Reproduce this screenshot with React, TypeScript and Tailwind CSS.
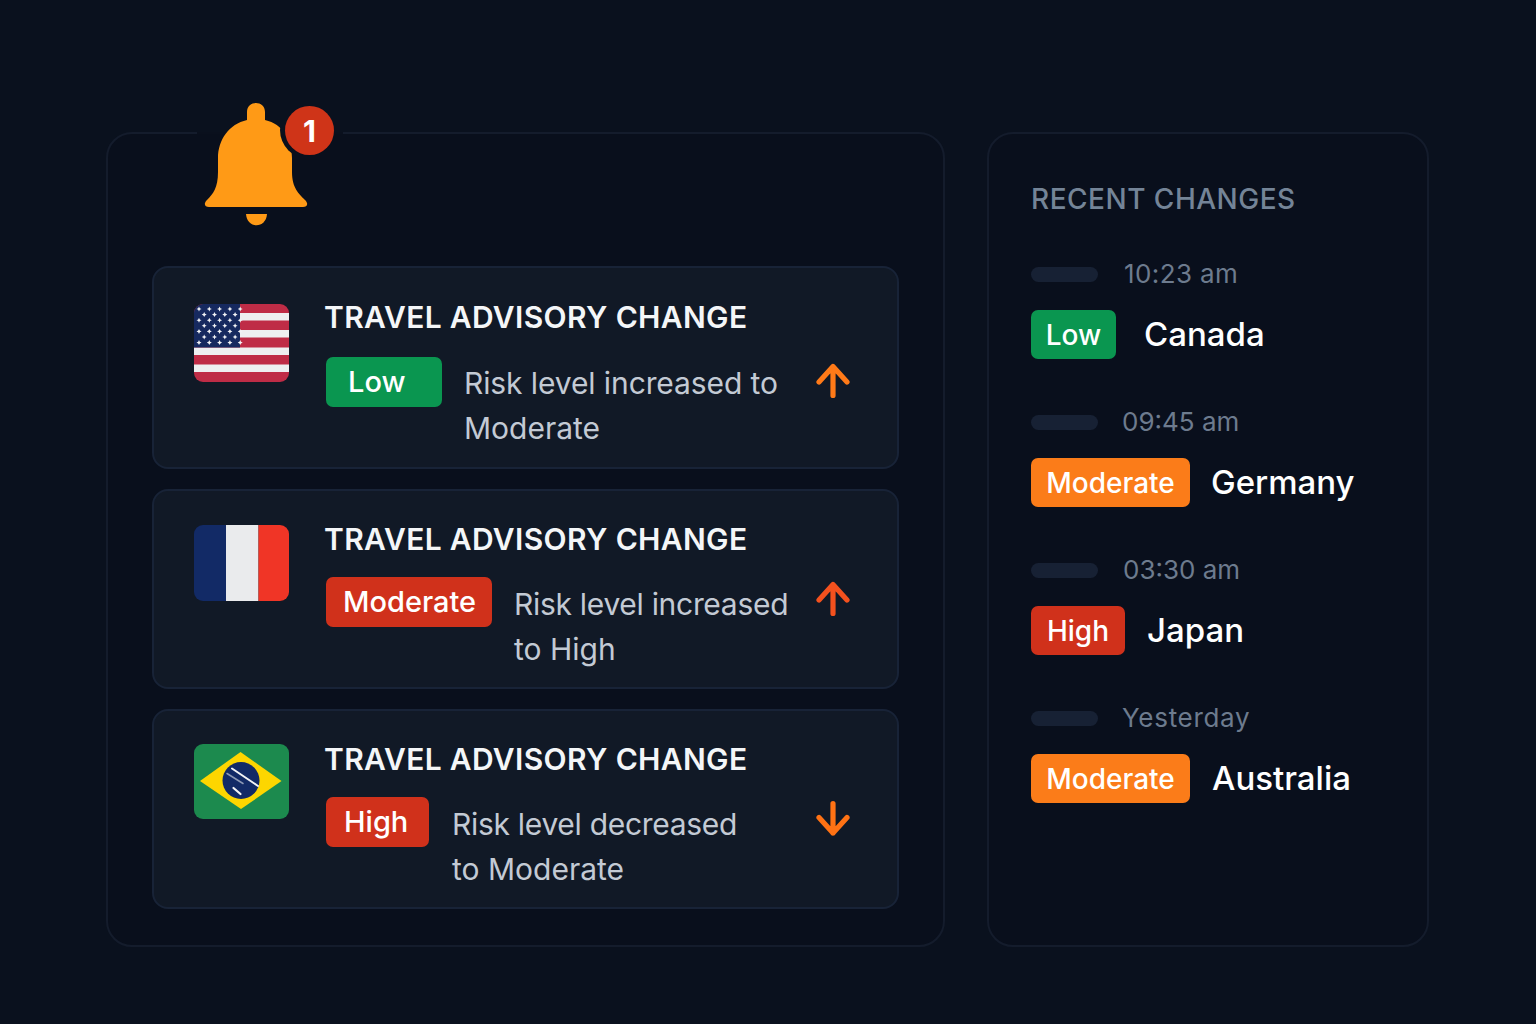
import React from "react";

const font = { fontFamily: "Inter, 'Noto Sans', sans-serif" };

function UsFlag() {
  const stars: [number, number][] = [];
  for (let r = 0; r < 7; r++) {
    const n = r % 2 === 0 ? 5 : 4;
    for (let c = 0; c < n; c++) {
      stars.push([r % 2 === 0 ? 5 + c * 10.3 : 10.2 + c * 10.3, 5 + r * 5.6]);
    }
  }
  return (
    <svg width="95" height="78" viewBox="0 0 95 78" className="shrink-0 block">
      <defs>
        <clipPath id="us"><rect width="95" height="78" rx="9" /></clipPath>
      </defs>
      <g clipPath="url(#us)">
        <rect width="95" height="78" fill="#bf2c46" />
        {[9, 26, 43.5, 60.5].map((y) => (
          <rect key={y} x="0" y={y} width="95" height="7.5" fill="#eeeff0" />
        ))}
        <rect width="46" height="43.5" fill="#16295f" />
        {stars.map(([x, y], i) => (
          <path key={i} d={`M${x} ${y - 2.5}L${x + 0.8} ${y - 0.8}L${x + 2.5} ${y}L${x + 0.8} ${y + 0.8}L${x} ${y + 2.5}L${x - 0.8} ${y + 0.8}L${x - 2.5} ${y}L${x - 0.8} ${y - 0.8}Z`} fill="#f2f3f5" />
        ))}
      </g>
    </svg>
  );
}

function FrFlag() {
  return (
    <svg width="95" height="76" viewBox="0 0 95 76" className="shrink-0 block">
      <defs>
        <clipPath id="fr"><rect width="95" height="76" rx="9" /></clipPath>
      </defs>
      <g clipPath="url(#fr)">
        <rect width="32" height="76" fill="#122a66" />
        <rect x="32" width="32.5" height="76" fill="#eaebed" />
        <rect x="64.5" width="30.5" height="76" fill="#f03526" />
      </g>
    </svg>
  );
}

function BrFlag() {
  return (
    <svg width="95" height="75" viewBox="0 0 95 75" className="shrink-0 block">
      <rect width="95" height="75" rx="9" fill="#1c8a4e" />
      <path d="M6 37L46.5 8L87.5 37L47 65Z" fill="#fdd600" />
      <circle cx="47" cy="36.5" r="18.5" fill="#122a66" />
      <path d="M38 24.5L64 42" stroke="#f2f3f5" strokeWidth="2" strokeLinecap="round" />
      <path d="M33 29.5L49 39.5" stroke="#8c98b4" strokeWidth="1.5" strokeLinecap="round" />
      <path d="M39.5 44L46.5 50" stroke="#f2f3f5" strokeWidth="2.2" strokeLinecap="round" />
    </svg>
  );
}

function Arrow({ down, color }: { down?: boolean; color: string }) {
  return (
    <svg width="36" height="38" viewBox="0 0 36 38" fill="none" className="shrink-0 block">
      <g stroke={color} strokeWidth="5.2" strokeLinecap="round" strokeLinejoin="round">
        {down ? (
          <path d="M17 3.5V33M3 17.5L17 33L31 17.5" />
        ) : (
          <path d="M17 33.5V4.5M3 20L17 4.5L31 20" />
        )}
      </g>
    </svg>
  );
}

function Bell() {
  return (
    <div className="absolute left-[89px] top-[-34px] w-[146px] h-[126px]">
      <div className="absolute left-0 right-0 top-[32px] h-[2px] bg-[#0a101d]" />
      <svg width="146" height="126" viewBox="0 0 146 126" className="absolute left-0 top-0">
        <defs>
          <mask id="notch">
            <rect width="146" height="126" fill="white" />
            <circle cx="112" cy="30" r="29" fill="black" />
          </mask>
        </defs>
        <path
          mask="url(#notch)"
          d="M50 20V12C50 0 68 0 68 12V20C86 24 95 40 95 58V72C95 88 102 94 108 100C112 104 110 107 106 107H12C8 107 6 104 10 100C16 94 21 88 21 72V58C21 40 32 24 50 20Z"
          fill="#ff9a16"
        />
        <path d="M49 114H70C69 129 50 129 49 114Z" fill="#ff9a16" />
      </svg>
      <div className="absolute left-[88px] top-[6px] w-[49px] h-[49px] rounded-full bg-[#cf3418] flex items-center justify-center text-white text-[30px] font-bold leading-none">
        1
      </div>
    </div>
  );
}

function AdvisoryCard({
  flag,
  badge,
  badgeClass,
  textClass,
  line1,
  line2,
  line1Class,
  arrow,
  arrowClass,
  rowClass,
  cardClass,
  flagClass,
}: {
  flag: React.ReactNode;
  badge: string;
  badgeClass: string;
  textClass: string;
  line1: string;
  line2: string;
  line1Class: string;
  arrow: React.ReactNode;
  arrowClass: string;
  rowClass: string;
  cardClass: string;
  flagClass: string;
}) {
  return (
    <div className={`flex rounded-[16px] border-2 border-[#182337] bg-[#111926] pl-[40px] pr-[45px] ${cardClass}`}>
      <div className={`w-[95px] shrink-0 ${flagClass}`}>{flag}</div>
      <div className="ml-[35px] flex-1">
        <div className="text-[30px] leading-[36px] font-semibold text-[#f4f6f8] tracking-[0.34px] whitespace-nowrap">
          TRAVEL ADVISORY CHANGE
        </div>
        <div className={`flex items-start relative ${rowClass}`}>
          <div className={`h-[50px] rounded-[7px] flex items-center text-white text-[29px] font-medium ml-[2px] shrink-0 ${badgeClass}`}>
            {badge}
          </div>
          <div className={`text-[30px] leading-[45px] text-[#c3cad4] whitespace-nowrap ${textClass}`}>
            <div className={line1Class}>{line1}</div>
            <div>{line2}</div>
          </div>
          <div className={`ml-auto ${arrowClass}`}>{arrow}</div>
        </div>
      </div>
    </div>
  );
}

function RecentRow({
  time,
  timeClass,
  badge,
  badgeClass,
  name,
  nameClass,
}: {
  time: string;
  timeClass: string;
  badge: string;
  badgeClass: string;
  name: string;
  nameClass: string;
}) {
  return (
    <div className="h-[148px]">
      <div className="flex items-center h-[28px]">
        <div className="w-[67px] h-[15px] rounded-full bg-[#172134]" />
        <div className={`text-[26px] leading-[28px] text-[#6d7b8e] ${timeClass}`}>{time}</div>
      </div>
      <div className="flex items-center mt-[22px]">
        <div className={`h-[49px] rounded-[7px] flex items-center justify-center text-white text-[28px] font-medium ${badgeClass}`}>
          {badge}
        </div>
        <div className={`text-[33px] leading-[49px] font-medium text-white ${nameClass}`}>{name}</div>
      </div>
    </div>
  );
}

export default function App() {
  return (
    <div className="w-full h-[1024px] bg-[#0a111e] flex items-start pl-[106px] pt-[132px] gap-[42px]" style={font}>
      <div className="relative w-[839px] h-[815px] rounded-[26px] border-2 border-[#141c2c] bg-[#090f1c] px-[44px] pt-[132px] flex flex-col gap-[20px]">
        <Bell />
        <AdvisoryCard
          flag={<UsFlag />}
          badge="Low"
          badgeClass="w-[116px] pl-[22px] bg-[#0a9650]"
          textClass="ml-[22px] mt-[4px]"
          line1="Risk level increased to"
          line1Class="tracking-[-0.1px]"
          line2="Moderate"
          arrow={<Arrow color="#ff7a18" />}
          arrowClass="mt-[5px]"
          rowClass="mt-[22px]"
          cardClass="h-[203px] pt-[31px]"
          flagClass="pt-[5px]"
        />
        <AdvisoryCard
          flag={<FrFlag />}
          badge="Moderate"
          badgeClass="w-[166px] pl-[17px] bg-[#d0311b]"
          textClass="ml-[22px] mt-[5px]"
          line1="Risk level increased"
          line1Class="tracking-[-0.3px]"
          line2="to High"
          arrow={<Arrow color="#f4511e" />}
          arrowClass="mt-[3px]"
          rowClass="mt-[20px]"
          cardClass="h-[200px] pt-[30px]"
          flagClass="pt-[4px]"
        />
        <AdvisoryCard
          flag={<BrFlag />}
          badge="High"
          badgeClass="w-[103px] pl-[18px] bg-[#d0311b]"
          textClass="ml-[23px] mt-[5px]"
          line1="Risk level decreased"
          line1Class="tracking-[-0.3px]"
          line2="to Moderate"
          arrow={<Arrow down color="#ff7214" />}
          arrowClass="mt-[3px]"
          rowClass="mt-[20px]"
          cardClass="h-[200px] pt-[30px]"
          flagClass="pt-[3px]"
        />
      </div>
      <div className="w-[442px] h-[815px] rounded-[26px] border-2 border-[#141c2c] bg-[#090f1c] pl-[42px] pt-[48px]">
        <div className="text-[28px] leading-[34px] font-medium text-[#748497] tracking-[0.5px]">RECENT CHANGES</div>
        <div className="mt-[44px]">
          <RecentRow time="10:23 am" timeClass="ml-[26px] tracking-[0.4px]" badge="Low" badgeClass="w-[85px] bg-[#0a9650]" name="Canada" nameClass="ml-[28px]" />
          <RecentRow time="09:45 am" timeClass="ml-[24px]" badge="Moderate" badgeClass="w-[159px] bg-[#fb7c19]" name="Germany" nameClass="ml-[21px]" />
          <RecentRow time="03:30 am" timeClass="ml-[25px]" badge="High" badgeClass="w-[94px] bg-[#d0311b]" name="Japan" nameClass="ml-[22px]" />
          <RecentRow time="Yesterday" timeClass="ml-[24px] tracking-[0.7px]" badge="Moderate" badgeClass="w-[159px] bg-[#fb7c19]" name="Australia" nameClass="ml-[22px]" />
        </div>
      </div>
    </div>
  );
}
